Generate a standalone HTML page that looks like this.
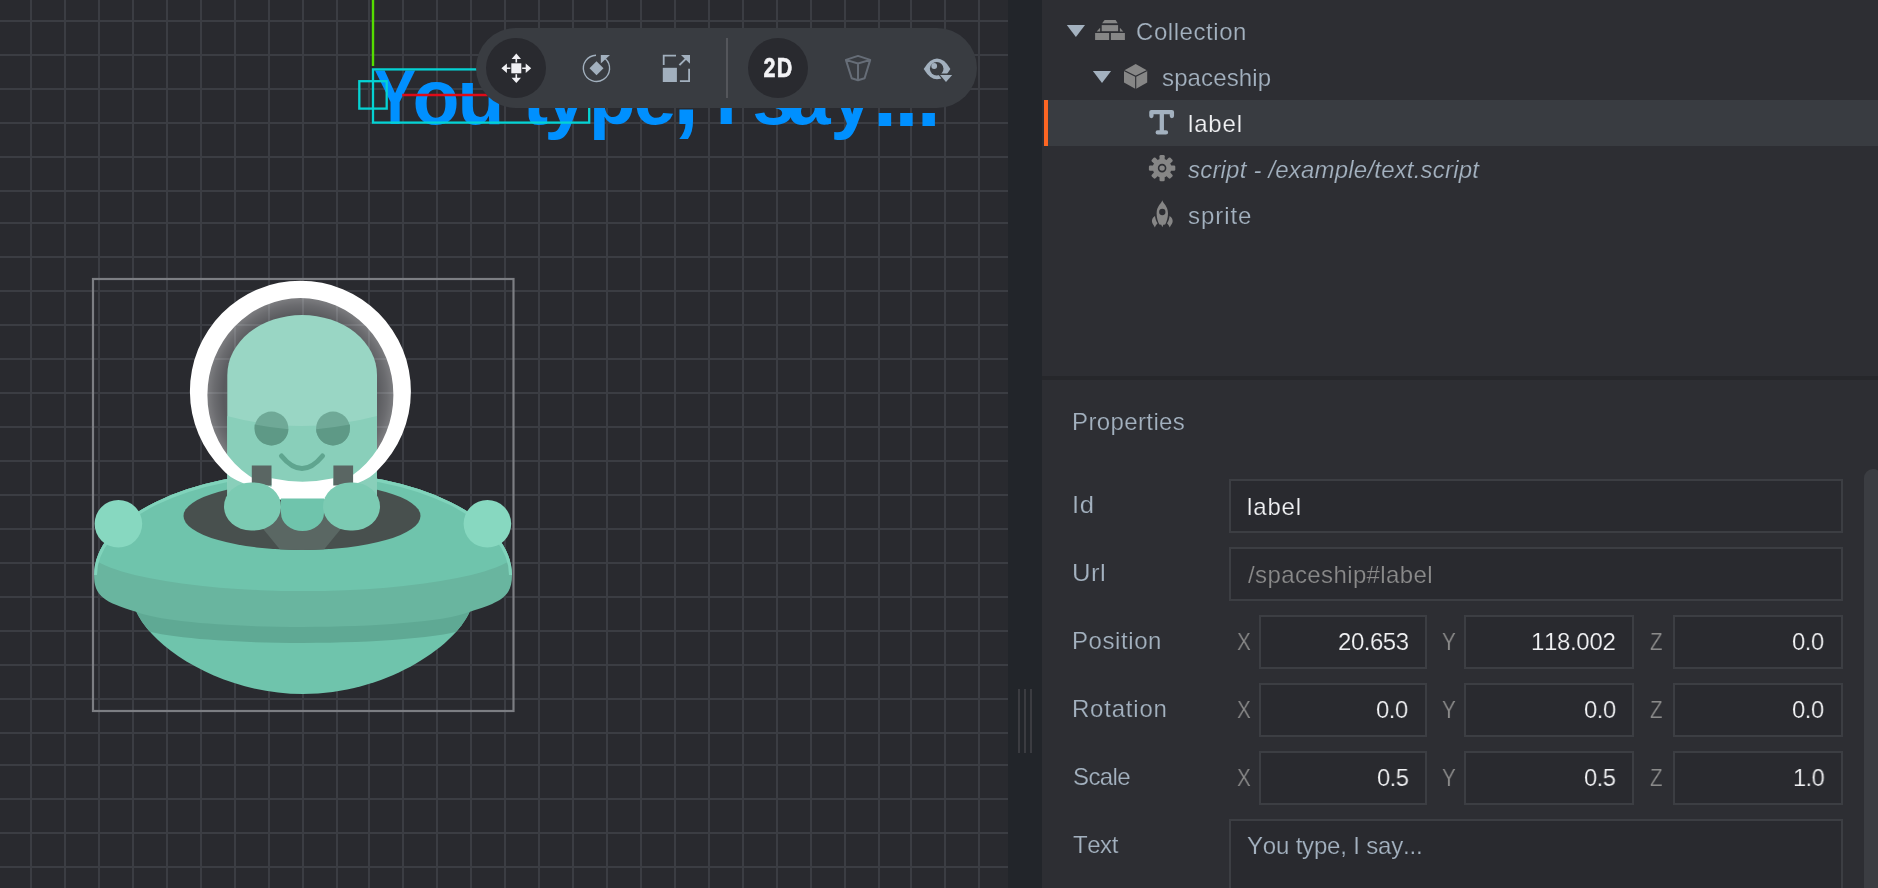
<!DOCTYPE html>
<html lang="en"><head><meta charset="utf-8"><title>Defold editor - label</title>
<style>
*{box-sizing:border-box;margin:0;padding:0}
html,body{width:1878px;height:888px;overflow:hidden;background:#2d2e33;font-family:"Liberation Sans",sans-serif;}
#scene{position:absolute;left:0;top:0;width:1008px;height:888px;background:#292a2f;overflow:hidden}
svg.lay{position:absolute;left:0;top:0;display:block}
#lbl{position:absolute;left:0;top:58.6px;height:77px;line-height:77px;font-size:77px;font-weight:bold;color:#0090ff;white-space:pre;filter:blur(.6px)}
#split{position:absolute;left:1008px;top:0;width:34px;height:888px;background:#22252a}
#split i{position:absolute;top:689px;width:2px;height:64px;background:#3b3c41}
#split i:nth-child(1){left:10px}#split i:nth-child(2){left:16px}#split i:nth-child(3){left:22px}
#toolbar{position:absolute;left:476px;top:28px;width:501px;height:80px;border-radius:40px;background:#393c41}
#toolbar .on{position:absolute;top:10px;width:60px;height:60px;border-radius:30px;background:#292a2f}
#toolbar .sep{position:absolute;left:250px;top:10px;width:2px;height:60px;background:#54565b}
#toolbar svg{position:absolute;left:0;top:0}
#toolbar .t2d{position:absolute;left:272px;top:10px;width:60px;height:60px;line-height:60px;text-align:center;color:#f3f3f6;font-weight:bold;font-size:28px;transform:scaleX(.77);-webkit-text-stroke:.6px #f3f3f6;letter-spacing:1.6px;padding-left:1.6px}
#panel{position:absolute;left:1042px;top:0;width:836px;height:888px;background:#2d2e33;overflow:hidden;color:#a3b1bf;font-size:24px;font-kerning:none}
#panel .sel{position:absolute;left:2px;top:100px;width:834px;height:46px;background:#393c41;border-left:4px solid #fd6623}
#panel .divider{position:absolute;left:0;top:376px;width:836px;height:4px;background:#26272b}
#panel .t{position:absolute;white-space:nowrap;line-height:30px;height:30px;will-change:transform}
#panel .t{-webkit-text-stroke:.2px #2d2e33}
#panel .inb{-webkit-text-stroke-color:#292a2f}
#panel .ons{-webkit-text-stroke-color:#393c41}
#panel .w{color:#f0f1f3}
#panel .it{font-style:italic}
#panel .dim{color:#8a8a8a}
#panel .box{position:absolute;height:54px;border:2px solid #3c3e43;background:#292a2f}
#panel .ax{color:#8a8a8a;transform:scaleX(.86);transform-origin:0 50%}
#panel .sb{position:absolute;left:822px;top:469px;width:18px;height:440px;border-radius:9px;background:#3b3d42}
#panel svg{position:absolute;left:0;top:0}

</style></head><body>
<div id="scene">
<svg class="lay" width="1008" height="888" viewBox="0 0 1008 888">
<path d="M31 0V888M65 0V888M99 0V888M133 0V888M167 0V888M201 0V888M235 0V888M269 0V888M303 0V888M337 0V888M369 0V888M403 0V888M437 0V888M471 0V888M505 0V888M539 0V888M573 0V888M607 0V888M641 0V888M675 0V888M709 0V888M743 0V888M777 0V888M811 0V888M845 0V888M879 0V888M911 0V888M945 0V888M979 0V888M0 21H1008M0 55H1008M0 89H1008M0 123H1008M0 157H1008M0 191H1008M0 223H1008M0 257H1008M0 291H1008M0 325H1008M0 359H1008M0 393H1008M0 427H1008M0 461H1008M0 495H1008M0 529H1008M0 563H1008M0 597H1008M0 631H1008M0 665H1008M0 699H1008M0 733H1008M0 765H1008M0 799H1008M0 833H1008M0 867H1008" stroke="#3b3d43" stroke-width="2" fill="none"/>
</svg>
<div id="lbl"><span style="margin-left:373.53px;display:inline-block;transform:scaleX(0.82);transform-origin:0 50%">Y</span><span style="margin-left:-12.29px">o</span><span style="margin-left:-2.11px">u</span> <span style="margin-left:-3.58px">t</span><span style="margin-left:-3.83px">y</span><span style="margin-left:1.61px">p</span><span style="margin-left:-2.26px">e</span><span style="margin-left:-3.55px;font-size:96px;line-height:0">,</span> <span style="margin-left:-5.30px">I</span> <span style="margin-left:-6.12px">s</span><span style="margin-left:-7.36px">a</span><span style="margin-left:-0.21px">y</span><span style="margin-left:-0.39px;font-size:88px;line-height:0;position:relative;top:2px">.</span><span style="margin-left:-2.95px;font-size:88px;line-height:0;position:relative;top:2px">.</span><span style="margin-left:-2.35px;font-size:88px;line-height:0;position:relative;top:2px">.</span></div>
<svg class="lay" width="1008" height="888" viewBox="0 0 1008 888">
<defs>
<clipPath id="rimclip"><path d="M94 575A209 103 0 0 1 512 575C512 596 502 602 470 611.8C420 632 186 632 136 611.8C104 602 94 596 94 575Z"/></clipPath>
<clipPath id="bowlclip"><path d="M136 600V611C152 648 222 694 303 694C384 694 454 648 470 611V600Z"/></clipPath>
<clipPath id="holeclip"><ellipse cx="302" cy="516" rx="118.5" ry="34"/></clipPath>
<clipPath id="headclip"><path d="M227.3 500V375A74.85 60 0 0 1 377 375V500Z"/></clipPath>
<radialGradient id="glass" cx=".5" cy=".5" r=".5">
<stop offset="0" stop-color="#fff" stop-opacity=".2"/><stop offset=".82" stop-color="#fff" stop-opacity=".23"/><stop offset=".92" stop-color="#fff" stop-opacity=".31"/><stop offset="1" stop-color="#fff" stop-opacity=".4"/></radialGradient>
</defs>
<g id="ship">
<ellipse cx="300.4" cy="395" rx="94" ry="98" fill="url(#glass)"/>
<path d="M136 600V611C152 648 222 694 303 694C384 694 454 648 470 611V600Z" fill="#6fc4ac"/>
<g clip-path="url(#bowlclip)"><path d="M94 575A209 103 0 0 1 512 575C512 596 502 602 470 611.8C420 632 186 632 136 611.8C104 602 94 596 94 575Z" transform="translate(0 16)" fill="#5fa994"/></g>
<path d="M94 575A209 103 0 0 1 512 575C512 596 502 602 470 611.8C420 632 186 632 136 611.8C104 602 94 596 94 575Z" fill="#69b59f"/>
<g clip-path="url(#rimclip)"><path d="M60 400H550V547H521A218 44 0 0 1 85 547H60Z" fill="#6fc4ac"/>
<path d="M94 575A209 103 0 0 1 512 575" fill="none" stroke="#80d3bb" stroke-width="6"/></g>
<circle cx="118.4" cy="523.8" r="23.8" fill="#87d8c0"/>
<circle cx="487.4" cy="523.8" r="23.8" fill="#87d8c0"/>
<ellipse cx="302" cy="516" rx="118.5" ry="34" fill="#48504e"/>
<g clip-path="url(#holeclip)"><path d="M246 508H358L322 552H282Z" fill="#5a6763"/></g>
<path d="M227.3 500V375A74.85 60 0 0 1 377 375V500Z" fill="#99d6c4"/>
<g clip-path="url(#headclip)"><path d="M220 414Q302 438 384 414V510H220Z" fill="#89cfba"/>
<circle cx="271.5" cy="428.5" r="16.9" fill="#6fa997"/><circle cx="333" cy="428.5" r="16.9" fill="#6fa997"/>
<path d="M254.6 428.5A16.9 16.9 0 0 0 288.4 428.5L288.4 429.2Q271.5 427.6 254.6 424.4Z" fill="#5e9986"/>
<path d="M316.1 428.5A16.9 16.9 0 0 0 349.9 428.5L349.9 424.4Q333 427.6 316.1 429.2Z" fill="#5e9986"/>
</g>
<path d="M281.5 456Q302 481 322.5 456" fill="none" stroke="#5fa58f" stroke-width="5" stroke-linecap="round"/>
<path fill-rule="evenodd" fill="#fff" d="M222.9 470A110.5 110.5 0 1 1 377.9 470C371.8 477 362.8 481.5 353.2 484.7L319.8 497L300.4 499.7L281 497L247.6 484.7C238 481.5 229 477 222.9 470ZM207.4 395A93 97 0 0 0 393.4 395A93 97 0 0 0 207.4 395Z"/><path d="M271.5 478.3Q302.5 485 333.4 478.3V499H271.5Z" fill="#fff"/>
<rect x="251.8" y="465.5" width="19.7" height="20" fill="#5a6663"/><rect x="333.4" y="465.5" width="19.7" height="20" fill="#5a6663"/>
<path d="M281 498.5H324V513A21.5 18 0 0 1 281 513Z" fill="#6fc4ac"/>
<rect x="224" y="482.5" width="57" height="48" rx="27" ry="25" fill="#7ccbb3"/>
<rect x="323" y="482.5" width="57" height="48" rx="27" ry="25" fill="#7ccbb3"/>
</g>
<rect x="93" y="279" width="420.5" height="432" fill="none" stroke="#7c7e83" stroke-width="2.2"/>

<g id="labelgizmo" fill="none" stroke-width="2.3">
<path d="M373 0V66" stroke="#55dd00" stroke-width="2.4"/>
<path d="M402.2 94.9H600" stroke="#e00b18" stroke-width="2.5"/>
<rect x="373" y="69.4" width="216.2" height="53.2" stroke="#05d2d3"/>
<rect x="359.3" y="81.2" width="27.4" height="27.4" stroke="#05d2d3"/>
</g>

</svg>
<div id="toolbar">
<div class="on" style="left:10.3px"></div>
<div class="sep"></div>
<div class="on" style="left:271.7px"></div>
<div class="t2d">2D</div>
<svg width="501" height="80" viewBox="476 28 501 80">
<g fill="#f0f0f4"><rect x="511.3" y="63.3" width="10" height="10"/>
<path d="M516.3 53.4L521 58.9H517.1V62.4H515.5V58.9H511.6Z"/>
<path d="M516.3 83.1L521 77.7H517.1V74.2H515.5V77.7H511.6Z"/>
<path d="M501.4 68.3L506.9 63.6V67.5H510.4V69.1H506.9V73Z"/>
<path d="M531.2 68.3L525.7 63.6V67.5H522.2V69.1H525.7V73Z"/></g>
<g fill="#a2b0be">
<path d="M596.5 61.3L603.5 68.3L596.5 75.3L589.5 68.3Z"/>
<path d="M600.8 54.9H610L600.8 63.4Z"/>
<path d="M605.4 58.7A13.1 13.1 0 1 1 596 55.2" fill="none" stroke="#a2b0be" stroke-width="1.4"/>
<rect x="662.8" y="67.8" width="14.1" height="14.2"/>
<path d="M662.8 65.1V54.8H676V56.6H664.6V65.1Z"/>
<path d="M690 68.7V82H679.9V80.2H688.2V68.7Z"/>
<path d="M681 55H690V63.8Z"/>
<path d="M679.4 65.1L686 58.6" stroke="#a2b0be" stroke-width="2" fill="none"/>
</g>
<path d="M858 55.9L870.2 59.9L858 63.5L845.9 59.9ZM845.9 59.9L851.7 78.2L858 80.2L864.6 78.2L870.2 59.9M858 63.5V80.2" fill="none" stroke="#666d77" stroke-width="2" stroke-linejoin="round"/>
<path d="M923.7 69Q930 58.6 937 58.6Q944.5 58.6 950.4 69Q944.5 79.3 937 79.3Q930 79.3 923.7 69Z" fill="#a2b0be"/>
<circle cx="936.7" cy="68.7" r="6.8" fill="#393c41"/>
<circle cx="934.2" cy="66" r="2.9" fill="#a2b0be"/>
<path d="M937.5 73.6H954.5L946 84.5Z" fill="#393c41"/>
<path d="M940 75H952.2L946 82Z" fill="#a2b0be"/>
</svg>
</div>

</div>
<div id="split"><i></i><i></i><i></i></div>
<div id="panel">
<div class="sel"></div>
<div class="divider"></div>
<div class="sb"></div>
<svg width="836" height="260" viewBox="1042 0 836 260">
<g fill="#a3b1bf"><path d="M1066.8 25.1H1085L1075.9 37Z"/><path d="M1092.9 71.1H1111.1L1102 82.9Z"/></g>
<g fill="#868686"><path d="M1104.6 20.1H1115.6L1117.7 23.3H1102.1Z"/><rect x="1101.7" y="25.1" width="16.4" height="6.1"/><rect x="1095.1" y="33" width="14" height="7"/><rect x="1110.9" y="33" width="14" height="7"/><path d="M1096.7 31.6L1100.1 27.8V31.6Z"/><path d="M1123.3 31.6L1119.9 27.8V31.6Z"/></g>
<path d="M1135.7 63.9L1147.2 70.4V82.6L1135.7 88.9L1124 82.6V70.4Z" fill="#868686"/><path d="M1124 70.4L1135.7 76.3L1147.2 70.4M1135.7 76.3V88.9" fill="none" stroke="#2d2e33" stroke-width="1.1"/>
<path d="M1151.4 116V112.1H1171.9V116M1161.8 112.1V132.4M1157.7 132.4H1166" fill="none" stroke="#a3b1bf" stroke-width="4.3" stroke-linecap="round" stroke-linejoin="round"/>
<g fill="#868686"><circle cx="1162.1" cy="168.1" r="9.3"/><rect x="1159.5" y="154.9" width="5.2" height="8" rx="1.3" transform="rotate(0 1162.1 168.1)"/><rect x="1159.5" y="154.9" width="5.2" height="8" rx="1.3" transform="rotate(45 1162.1 168.1)"/><rect x="1159.5" y="154.9" width="5.2" height="8" rx="1.3" transform="rotate(90 1162.1 168.1)"/><rect x="1159.5" y="154.9" width="5.2" height="8" rx="1.3" transform="rotate(135 1162.1 168.1)"/><rect x="1159.5" y="154.9" width="5.2" height="8" rx="1.3" transform="rotate(180 1162.1 168.1)"/><rect x="1159.5" y="154.9" width="5.2" height="8" rx="1.3" transform="rotate(225 1162.1 168.1)"/><rect x="1159.5" y="154.9" width="5.2" height="8" rx="1.3" transform="rotate(270 1162.1 168.1)"/><rect x="1159.5" y="154.9" width="5.2" height="8" rx="1.3" transform="rotate(315 1162.1 168.1)"/></g><circle cx="1162.1" cy="168.1" r="3.5" fill="none" stroke="#2d2e33" stroke-width="1.6"/>
<g fill="#868686"><path d="M1162.3 200.3C1162.8 203 1168 206 1168 213.5C1168 218 1166.5 222 1165.2 224.6L1163.3 224.8L1162.3 227.3L1161.3 224.8L1159.4 224.6C1158 222 1156.6 218 1156.6 213.5C1156.6 206 1161.8 203 1162.3 200.3Z"/><path d="M1155 216C1152.5 217.5 1151.6 220 1152 222C1152.5 224 1154 225.5 1154.8 227.6C1155.3 225.8 1156.5 224.5 1157.6 223.2C1156 221 1155.3 218.5 1155 216Z"/><path d="M 1169.6 216.0 C 1172.1 217.5 1173.0 220.0 1172.6 222.0 C 1172.1 224.0 1170.6 225.5 1169.8 227.6 C 1169.3 225.8 1168.1 224.5 1167.0 223.2 C 1168.6 221.0 1169.3 218.5 1169.6 216.0 Z"/></g><circle cx="1162.3" cy="212" r="3.15" fill="#2d2e33"/>
</svg>
<div class="t" style="left:93.78px;top:17.40px;letter-spacing:0.555px">Collection</div>
<div class="t" style="left:120.23px;top:63.40px;letter-spacing:0.126px">spaceship</div>
<div class="t w ons" style="left:146.38px;top:108.90px;letter-spacing:0.829px">label</div>
<div class="t it" style="left:145.94px;top:154.80px;letter-spacing:0.197px">script - /example/text.script</div>
<div class="t" style="left:145.83px;top:200.90px;letter-spacing:0.949px">sprite</div>
<div class="t" style="left:30.03px;top:406.90px;letter-spacing:0.384px">Properties</div>
<div class="t" style="left:29.53px;top:489.90px;letter-spacing:0.500px;transform:scaleX(1.068);transform-origin:0 50%">Id</div>
<div class="t" style="left:29.92px;top:557.90px;letter-spacing:0.500px;transform:scaleX(1.067);transform-origin:0 50%">Url</div>
<div class="t" style="left:29.93px;top:625.90px;letter-spacing:0.578px">Position</div>
<div class="t" style="left:29.93px;top:693.90px;letter-spacing:0.791px">Rotation</div>
<div class="t" style="left:30.81px;top:761.90px;letter-spacing:-0.620px">Scale</div>
<div class="t" style="left:31.36px;top:829.90px;letter-spacing:-0.454px">Text</div>
<div class="box" style="left:187px;top:479px;width:614px"></div>
<div class="box" style="left:187px;top:547px;width:614px"></div>
<div class="box" style="left:217px;top:615px;width:168px"></div>
<div class="box" style="left:422px;top:615px;width:170px"></div>
<div class="box" style="left:631px;top:615px;width:170px"></div>
<div class="box" style="left:217px;top:683px;width:168px"></div>
<div class="box" style="left:422px;top:683px;width:170px"></div>
<div class="box" style="left:631px;top:683px;width:170px"></div>
<div class="box" style="left:217px;top:751px;width:168px"></div>
<div class="box" style="left:422px;top:751px;width:170px"></div>
<div class="box" style="left:631px;top:751px;width:170px"></div>
<div class="box" style="left:187px;top:819px;width:614px;height:90px"></div>
<div class="t w inb" style="left:205.08px;top:491.90px;letter-spacing:0.854px">label</div>
<div class="t dim inb" style="left:205.80px;top:559.90px;letter-spacing:0.388px">/spaceship#label</div>
<div class="t ax" style="left:194.76px;top:626.90px">X</div>
<div class="t ax" style="left:400.47px;top:626.90px">Y</div>
<div class="t ax" style="left:607.94px;top:626.90px">Z</div>
<div class="t w inb" style="left:295.59px;top:626.90px;letter-spacing:-0.469px">20.653</div>
<div class="t w inb" style="left:489.47px;top:626.90px;letter-spacing:-0.336px">118.002</div>
<div class="t w inb" style="left:750.47px;top:626.90px;letter-spacing:-0.500px;transform:scaleX(0.994);transform-origin:0 50%">0.0</div>
<div class="t ax" style="left:194.76px;top:694.90px">X</div>
<div class="t ax" style="left:400.47px;top:694.90px">Y</div>
<div class="t ax" style="left:607.94px;top:694.90px">Z</div>
<div class="t w inb" style="left:334.37px;top:694.90px;letter-spacing:-0.500px;transform:scaleX(0.994);transform-origin:0 50%">0.0</div>
<div class="t w inb" style="left:541.77px;top:694.90px;letter-spacing:-0.500px;transform:scaleX(0.994);transform-origin:0 50%">0.0</div>
<div class="t w inb" style="left:750.47px;top:694.90px;letter-spacing:-0.500px;transform:scaleX(0.994);transform-origin:0 50%">0.0</div>
<div class="t ax" style="left:194.76px;top:762.90px">X</div>
<div class="t ax" style="left:400.47px;top:762.90px">Y</div>
<div class="t ax" style="left:607.94px;top:762.90px">Z</div>
<div class="t w inb" style="left:334.68px;top:762.90px;letter-spacing:-0.500px;transform:scaleX(0.986);transform-origin:0 50%">0.5</div>
<div class="t w inb" style="left:542.08px;top:762.90px;letter-spacing:-0.500px;transform:scaleX(0.986);transform-origin:0 50%">0.5</div>
<div class="t w inb" style="left:750.91px;top:762.90px;letter-spacing:-0.500px;transform:scaleX(0.980);transform-origin:0 50%">1.0</div>
<div class="t inb" style="left:204.67px;top:830.90px;letter-spacing:-0.185px">You type, I say...</div>
</div>
</body></html>
